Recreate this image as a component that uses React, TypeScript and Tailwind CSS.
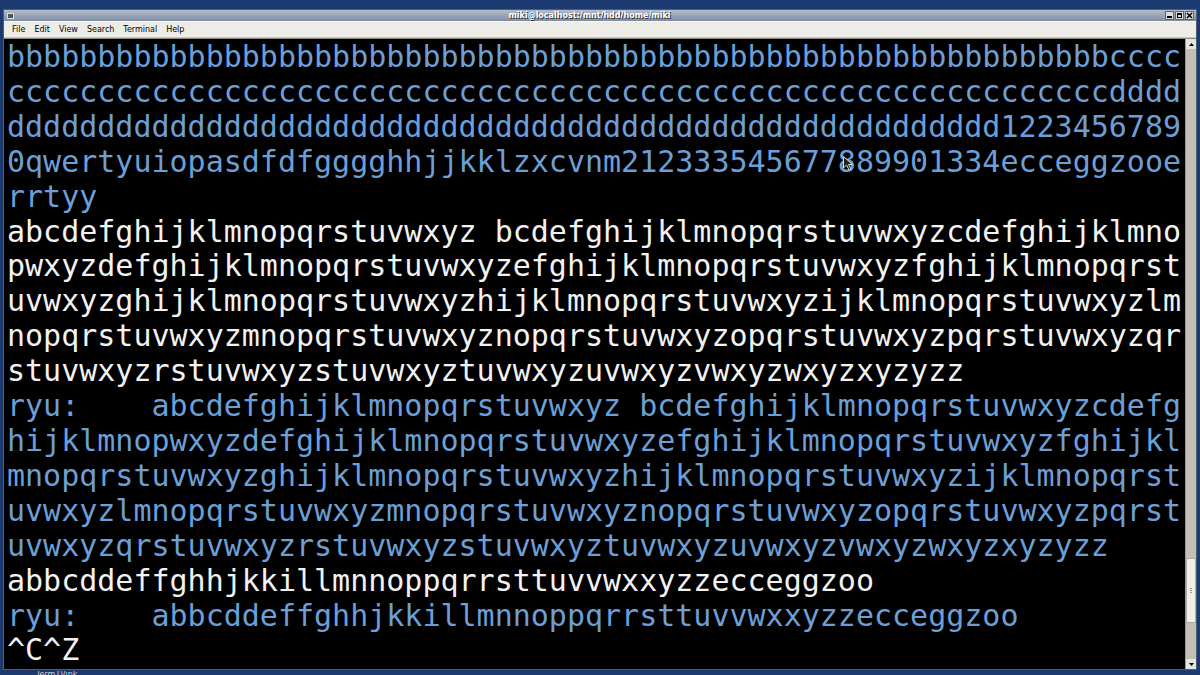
import React from "react";

const B = "#6b9fd6";
const W = "#f2f2f2";

const lines: [string, string][] = [
  ["b".repeat(61) + "cccc", B],
  ["c".repeat(61) + "dddd", B],
  ["d".repeat(55) + "1223456789", B],
  ["0qwertyuiopasdfdfgggghhjjkklzxcvnm212333545677889901334ecceggzooe", B],
  ["rrtyy", B],
  ["abcdefghijklmnopqrstuvwxyz bcdefghijklmnopqrstuvwxyzcdefghijklmno", W],
  ["pwxyzdefghijklmnopqrstuvwxyzefghijklmnopqrstuvwxyzfghijklmnopqrst", W],
  ["uvwxyzghijklmnopqrstuvwxyzhijklmnopqrstuvwxyzijklmnopqrstuvwxyzlm", W],
  ["nopqrstuvwxyzmnopqrstuvwxyznopqrstuvwxyzopqrstuvwxyzpqrstuvwxyzqr", W],
  ["stuvwxyzrstuvwxyzstuvwxyztuvwxyzuvwxyzvwxyzwxyzxyzyzz", W],
  ["ryu:    abcdefghijklmnopqrstuvwxyz bcdefghijklmnopqrstuvwxyzcdefg", B],
  ["hijklmnopwxyzdefghijklmnopqrstuvwxyzefghijklmnopqrstuvwxyzfghijkl", B],
  ["mnopqrstuvwxyzghijklmnopqrstuvwxyzhijklmnopqrstuvwxyzijklmnopqrst", B],
  ["uvwxyzlmnopqrstuvwxyzmnopqrstuvwxyznopqrstuvwxyzopqrstuvwxyzpqrst", B],
  ["uvwxyzqrstuvwxyzrstuvwxyzstuvwxyztuvwxyzuvwxyzvwxyzwxyzxyzyzz", B],
  ["abbcddeffghhjkkillmnnoppqrrsttuvvwxxyzzecceggzoo", W],
  ["ryu:    abbcddeffghhjkkillmnnoppqrrsttuvvwxxyzzecceggzoo", B],
  ["^C^Z", W],
];

const menu = ["File", "Edit", "View", "Search", "Terminal", "Help"];

function WinButtons() {
  return (
    <div className="flex gap-[1px] pr-[2px]">
      <div className="w-[9px] h-[9px] bg-[#dcdcd6] border border-[#5a6678] flex items-end justify-center pb-[1px]">
        <div className="w-[5px] h-[2px] bg-black" />
      </div>
      <div className="w-[9px] h-[9px] bg-[#dcdcd6] border border-[#5a6678] flex items-center justify-center">
        <div className="w-[5px] h-[5px] border border-black border-t-2" />
      </div>
      <div className="w-[9px] h-[9px] bg-[#dcdcd6] border border-[#5a6678] flex items-center justify-center">
        <svg width="7" height="7" viewBox="0 0 7 7">
          <path d="M1 1L6 6M6 1L1 6" stroke="black" strokeWidth="1.6" />
        </svg>
      </div>
    </div>
  );
}

export default function App() {
  return (
    <div
      className="relative w-[1200px] h-[675px] overflow-hidden flex flex-col bg-[#1c3a70] pt-[9px] px-[3px]"
      style={{ fontFamily: "'DejaVu Sans', sans-serif" }}
    >
      <div className="flex flex-col h-[662px] border border-[#4d5d78] bg-[#c9c6bd]">
        {/* title bar */}
        <div className="h-[11px] flex items-center bg-gradient-to-b from-[#b3bdcb] to-[#7f8da3] relative">
          <div className="ml-[3px] w-[7px] h-[6px] bg-[#555] border border-[#ddd]" />
          <div className="flex-1 text-center text-[8px] leading-[11px] font-bold text-white [text-shadow:1px_1px_0_#333]">
            miki@localhost:/mnt/hdd/home/miki
          </div>
          <WinButtons />
        </div>
        {/* menu bar */}
        <div className="h-[17px] flex items-center gap-[9px] pl-[8px] bg-[#edece7] border-t border-[#f8f8f6] border-b border-b-[#c9c6bd] text-[8px] text-black">
          {menu.map((m) => (
            <span key={m}>{m}</span>
          ))}
        </div>
        {/* terminal */}
        <div className="flex flex-1 min-h-0 border-t border-[#8a877f]">
          <div
            className="flex-1 bg-black pl-[3px] pt-[1px] overflow-hidden"
            style={{ fontFamily: "'DejaVu Sans Mono', monospace" }}
          >
            {lines.map(([t, c], i) => (
              <div
                key={i}
                className="whitespace-pre text-[30px] leading-[34.9px]"
                style={{ color: c }}
              >
                {t}
              </div>
            ))}
          </div>
          <div className="w-[11px] flex flex-col bg-[#c3bfb5] border-l border-[#9f9b92]">
            <div className="h-[10px] flex items-center justify-center bg-[#e6e4de]">
              <svg width="5" height="3" viewBox="0 0 5 3">
                <path d="M0 3L2.5 0L5 3Z" fill="black" />
              </svg>
            </div>
            <div className="flex-1" />
            <div className="h-[65px] bg-[#efeee9] border border-[#b0ada5] flex flex-col items-center justify-center gap-[1px]">
              <div className="w-[2px] h-[1px] bg-[#999]" />
              <div className="w-[2px] h-[1px] bg-[#999]" />
              <div className="w-[2px] h-[1px] bg-[#999]" />
            </div>
            <div className="h-[36px]" />
            <div className="h-[10px] flex items-center justify-center bg-[#e6e4de]">
              <svg width="5" height="3" viewBox="0 0 5 3">
                <path d="M0 0L2.5 3L5 0Z" fill="black" />
              </svg>
            </div>
          </div>
        </div>
      </div>
      <div className="h-[4px] overflow-hidden pl-[33px] text-[8px] leading-[8px] text-[#ccd] mt-[1px]">
        TermTVink
      </div>
      {/* mouse pointer */}
      <svg
        className="absolute left-[843px] top-[156px]"
        width="10"
        height="15"
        viewBox="0 0 10 15"
      >
        <path d="M0.5 0.5L0.5 12L3.5 9L6 14L8 13L5.5 8.5L9.5 8.5Z" fill="#222" stroke="#ddd" strokeWidth="1" />
      </svg>
    </div>
  );
}
